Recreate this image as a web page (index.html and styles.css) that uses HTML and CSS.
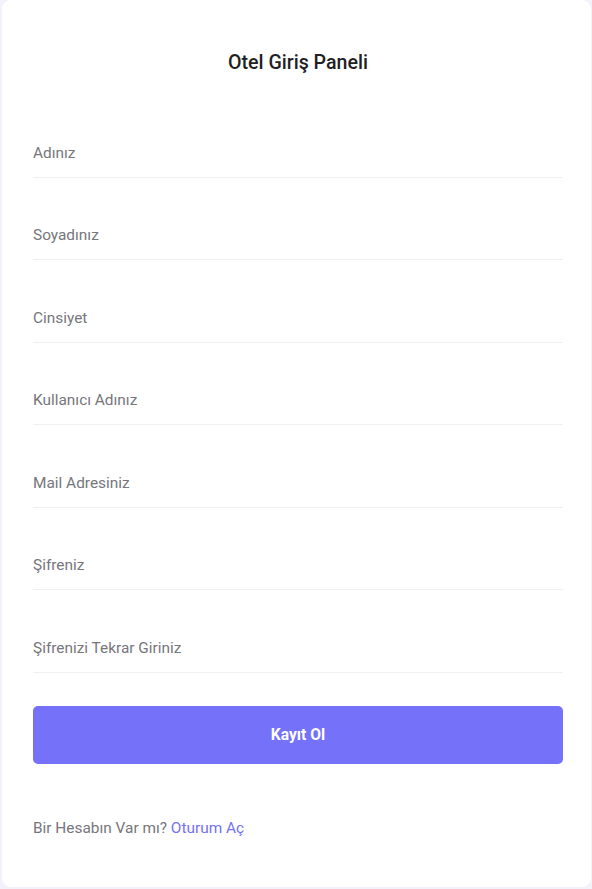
FILE: index.html
```html
<!DOCTYPE html>
<html lang="tr">
<head>
<meta charset="utf-8">
<title>Otel Giriş Paneli</title>
<link rel="stylesheet" href="styles.css">
</head>
<body>
<div class="card">
  <h1 class="title">Otel Giriş Paneli</h1>
  <form class="form">
    <input class="field" type="text" placeholder="Adınız">
    <input class="field" type="text" placeholder="Soyadınız">
    <input class="field" type="text" placeholder="Cinsiyet">
    <input class="field" type="text" placeholder="Kullanıcı Adınız">
    <input class="field" type="email" placeholder="Mail Adresiniz">
    <input class="field" type="password" placeholder="Şifreniz">
    <input class="field" type="password" placeholder="Şifrenizi Tekrar Giriniz">
    <button class="btn" type="button">Kayıt Ol</button>
  </form>
  <p class="footer">Bir Hesabın Var mı? <a class="link" href="#">Oturum Aç</a></p>
</div>
</body>
</html>
```
FILE: styles.css
```css
* { box-sizing: border-box; }
html, body { margin: 0; padding: 0; }
body {
  background: #f3f2fb;
  font-family: Roboto, "Liberation Sans", sans-serif;
  padding: 0 1px 2px 2px;
}
.card {
  background: #fff;
  border-radius: 9px;
  height: 887px;
  padding: 52px 28px 0 31px;
}
.title {
  margin: 0;
  text-align: center;
  font-size: 19.6px;
  font-weight: 500;
  line-height: 22px;
  color: #1f1f24;
}
.form {
  display: flex;
  flex-direction: column;
  gap: 35px;
  margin-top: 56px;
}
.field {
  display: block;
  width: 100%;
  height: 47.5px;
  border: none;
  border-bottom: 1px solid #f0f0f2;
  padding: 0 0 1px 0;
  font-family: inherit;
  font-size: 15.4px;
  color: #555;
  outline: none;
  background: transparent;
}
.field::placeholder { color: #76767c; }
.btn {
  margin-top: -2px;
  height: 58px;
  width: 100%;
  border: none;
  border-radius: 5px;
  background: #7571f9;
  color: #fff;
  font-family: inherit;
  font-size: 15.6px;
  font-weight: 700;
  cursor: pointer;
}
.footer {
  margin: 55px 0 0;
  font-size: 15.4px;
  line-height: 18px;
  color: #76767c;
}
.link {
  color: #7571f9;
  text-decoration: none;
}
```
